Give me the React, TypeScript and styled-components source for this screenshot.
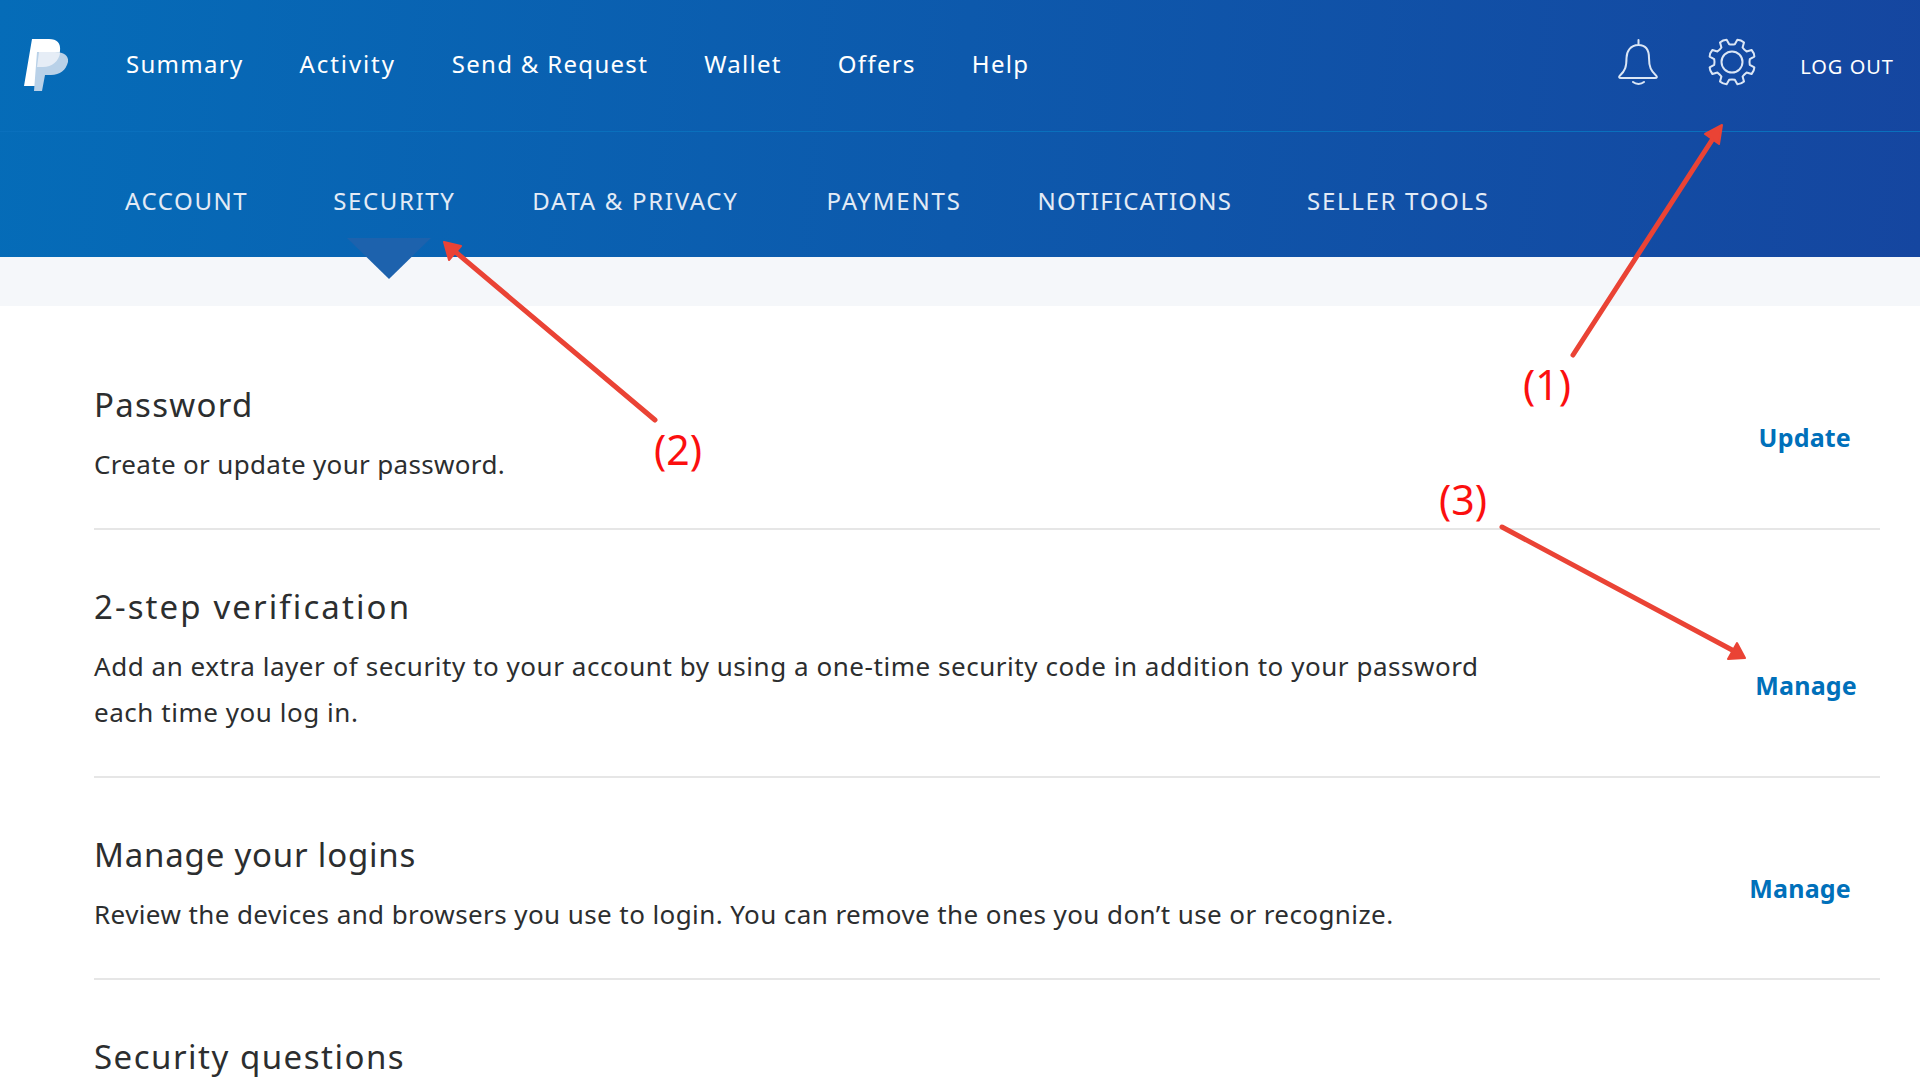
import React from "react";
import styled, { createGlobalStyle } from "styled-components";

const Global = createGlobalStyle`
  html, body { margin: 0; padding: 0; background: #fff; }
  body { font-family: "Noto Sans", "Open Sans", sans-serif; overflow: hidden; }
`;

const Page = styled.div`
  position: relative;
  width: 1920px;
  height: 1080px;
  overflow: hidden;
  background: #fff;
`;

const Header = styled.header`
  background: linear-gradient(95deg, #056cb8 0%, #1546a0 100%);
  height: 257px;
`;

const TopBar = styled.div`
  height: 132px;
  box-sizing: border-box;
  border-bottom: 1px solid #0a70bd;
  display: flex;
  align-items: center;
  padding: 0 26px 0 24px;
`;

const Logo = styled.svg`
  width: 44px;
  height: 52px;
  margin: -2px 58px 0 0;
  flex: none;
`;

const TopNav = styled.nav`
  display: flex;
  gap: 56px;
  flex: 1;
  margin-top: -3px;
`;

const TopLink = styled.a<{ $track: number }>`
  color: #fff;
  font-size: 24px;
  line-height: 32px;
  letter-spacing: ${(p) => p.$track}px;
`;

const IconButton = styled.svg<{ $gap: number }>`
  flex: none;
  width: 48px;
  height: 48px;
  margin: -7px ${(p) => p.$gap}px 0 0;
  fill: none;
  stroke: #dbe6f5;
  stroke-width: 2;
  stroke-linejoin: round;
  stroke-linecap: round;
`;

const LogOut = styled.a`
  color: #fff;
  font-size: 20px;
  letter-spacing: 1px;
  margin-top: 2px;
`;

const SubNav = styled.nav`
  height: 125px;
  display: flex;
  align-items: flex-start;
  padding: 51px 0 0 125px;
  box-sizing: border-box;
`;

const SubLink = styled.a<{ $after: number; $track: number }>`
  color: #e3ebf6;
  font-size: 24px;
  line-height: 36px;
  letter-spacing: ${(p) => p.$track}px;
  margin-right: ${(p) => p.$after}px;
`;

const Band = styled.div`
  height: 49px;
  background: #f5f7fa;
`;

const Pointer = styled.div`
  position: absolute;
  left: 347px;
  top: 238px;
  width: 84px;
  height: 41px;
  background: #1d62ad;
  clip-path: polygon(0 0, 100% 0, 50% 100%);
`;

const Main = styled.main`
  padding: 22px 40px 0 94px;
`;

const Row = styled.section`
  display: flex;
  align-items: center;
  justify-content: space-between;
  padding: 59px 0 41px;
  border-bottom: 2px solid #e6e6e6;

  &:last-child {
    border-bottom: 0;
  }
`;

const RowText = styled.div`
  width: 1420px;
`;

const Title = styled.h2<{ $track: number }>`
  margin: 0 0 18px;
  font-size: 33px;
  line-height: 36px;
  font-weight: 400;
  color: #2c2e2f;
  letter-spacing: ${(p) => p.$track}px;
`;

const Description = styled.p<{ $track: number }>`
  margin: 0;
  font-size: 26px;
  line-height: 46px;
  color: #2c2e2f;
  letter-spacing: ${(p) => p.$track}px;
`;

const Action = styled.a<{ $right: number; $drop: number }>`
  color: #0070ba;
  font-size: 25px;
  font-weight: 700;
  letter-spacing: 0.2px;
  margin-right: ${(p) => p.$right}px;
  margin-top: ${(p) => p.$drop}px;
`;

const Overlay = styled.svg`
  position: absolute;
  inset: 0;
  width: 1920px;
  height: 1080px;
  pointer-events: none;
`;

const Callout = styled.span<{ $x: number; $y: number }>`
  position: absolute;
  left: ${(p) => p.$x}px;
  top: ${(p) => p.$y}px;
  color: #fb0f0f;
  font-size: 41px;
  line-height: 50px;
`;

function gearPath(cx: number, cy: number, teeth: number, rOut: number, rIn: number) {
  const pts: string[] = [];
  const step = (Math.PI * 2) / teeth;
  for (let i = 0; i < teeth; i++) {
    const a = i * step + step / 2 - Math.PI / 2;
    const w = step * 0.2;
    const wIn = step * 0.3;
    const p = (r: number, t: number) =>
      `${(cx + r * Math.cos(t)).toFixed(2)} ${(cy + r * Math.sin(t)).toFixed(2)}`;
    pts.push(`${i === 0 ? "M" : "L"}${p(rIn, a - wIn)}`);
    pts.push(`L${p(rOut, a - w)}`);
    pts.push(`Q${p(rOut + 1, a)} ${p(rOut, a + w)}`);
    pts.push(`L${p(rIn, a + wIn)}`);
    pts.push(`Q${p(rIn - 0.8, a + step / 2)} ${p(rIn, a + step - wIn)}`);
  }
  return pts.join(" ") + "Z";
}

const TOP: [string, number][] = [
  ["Summary", 1.3],
  ["Activity", 1.9],
  ["Send & Request", 1.3],
  ["Wallet", 1.3],
  ["Offers", 1.3],
  ["Help", 1.3],
];
const SUB: [string, number, number][] = [
  ["ACCOUNT", 85, 1.6],
  ["SECURITY", 77, 1.6],
  ["DATA & PRIVACY", 88, 1.7],
  ["PAYMENTS", 76, 1.8],
  ["NOTIFICATIONS", 75, 1.2],
  ["SELLER TOOLS", 0, 1.7],
];

const ROWS = [
  {
    title: "Password",
    titleTrack: 1.3,
    text: "Create or update your password.",
    textTrack: 0.33,
    action: "Update",
    right: 29,
    drop: 0,
  },
  {
    title: "2-step verification",
    titleTrack: 2.1,
    text: "Add an extra layer of security to your account by using a one-time security code in addition to your password each time you log in.",
    textTrack: 0.54,
    action: "Manage",
    right: 23,
    drop: 46,
  },
  {
    title: "Manage your logins",
    titleTrack: 0.8,
    text: "Review the devices and browsers you use to login. You can remove the ones you don’t use or recognize.",
    textTrack: 0.41,
    action: "Manage",
    right: 29,
    drop: 2,
  },
  { title: "Security questions", titleTrack: 1.5, text: "", textTrack: 0, action: "", right: 29, drop: 0 },
];

export default function App() {
  return (
    <Page>
      <Global />
      <Header>
        <TopBar>
          <Logo viewBox="0 0 44 52">
            <path fill="#fff" d="M8 0H25C33 0 37 4 36 12C35 22 28 28 19 28H14L11 47H0Z" />
            <path fill="#b9d1e8" d="M13 13H31C39 13 45 16 44 23C42 31 36 36 27 36H21L18 52H10Z" />
            <path fill="#e6edf6" d="M13 13H31C34 13 36 14 36 14C35 22 28 28 19 28H14L13 28L15 13Z" />
          </Logo>
          <TopNav>
            {TOP.map(([t, track]) => (
              <TopLink key={t} $track={track}>
                {t}
              </TopLink>
            ))}
          </TopNav>
          <IconButton viewBox="0 0 48 48" $gap={44}>
            <path d="M22.5 2V7M22.5 7C31 7 33 14 33 20C33 29 35 33 40 37.500C41.500 39 41 40 39 40H5C3 40 2.500 39 4 37.500C9 33 10.500 29 10.500 20C10.500 14 14 7 22.500 7Z" />
            <path d="M17 44C20 46.500 25 46.500 28 44" />
          </IconButton>
          <IconButton viewBox="0 0 48 48" $gap={44}>
            <path d={gearPath(24, 24, 8, 23, 18)} />
            <circle cx="24" cy="24" r="10.500" />
          </IconButton>
          <LogOut>LOG OUT</LogOut>
        </TopBar>
        <SubNav>
          {SUB.map(([t, after, track]) => (
            <SubLink key={t} $after={after} $track={track}>
              {t}
            </SubLink>
          ))}
        </SubNav>
      </Header>
      <Band />
      <Pointer />
      <Main>
        {ROWS.map((r) => (
          <Row key={r.title}>
            <RowText>
              <Title $track={r.titleTrack}>{r.title}</Title>
              {r.text && <Description $track={r.textTrack}>{r.text}</Description>}
            </RowText>
            {r.action && (
              <Action $right={r.right} $drop={r.drop}>
                {r.action}
              </Action>
            )}
          </Row>
        ))}
      </Main>
      <Overlay viewBox="0 0 1920 1080">
        <g stroke="#ea4335" strokeWidth="5" strokeLinecap="round">
          <line x1="1573" y1="355" x2="1714" y2="137" />
          <line x1="655" y1="420" x2="452" y2="249" />
          <line x1="1502" y1="527" x2="1734" y2="651" />
        </g>
        <g fill="#ea4335" stroke="#ea4335" strokeWidth="2" strokeLinejoin="round">
          <polygon points="1722,125 1719,144 1705,134" />
          <polygon points="444,242 461,246 449,260" />
          <polygon points="1745,658 1728,659 1737,643" />
        </g>
      </Overlay>
      <Callout $x={1523} $y={359}>(1)</Callout>
      <Callout $x={654} $y={424}>(2)</Callout>
      <Callout $x={1439} $y={474}>(3)</Callout>
    </Page>
  );
}
